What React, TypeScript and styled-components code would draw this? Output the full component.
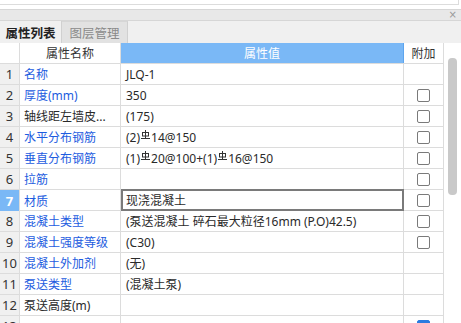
import React from "react";
import styled, { createGlobalStyle } from "styled-components";

const Global = createGlobalStyle`
  html, body { margin: 0; padding: 0; background: #fff; }
  body { font-family: "Noto Sans", "Noto Sans CJK SC", sans-serif; font-size: 12px; color: #333; overflow: hidden; }
`;

const Page = styled.div`
  width: 461px;
  height: 323px;
  overflow: hidden;
  display: flex;
  flex-direction: column;
`;

const TopBox = styled.div`
  height: 4px;
  border-bottom: 1px solid #dcdcdc;
  border-right: 1px solid #dcdcdc;
  margin-right: 2px;
`;

const TopGap = styled.div`
  height: 4px;
`;

const TitleBar = styled.div`
  height: 10px;
  background: #e8e8e8;
  border-top: 1px solid #d6d6d6;
  border-bottom: 1px solid #d6d6d6;
  display: flex;
  justify-content: flex-end;
  align-items: center;
  padding-right: 4px;
  color: #999;
  font-family: "DejaVu Sans", sans-serif;
  font-size: 10px;
  line-height: 10px;
`;

const TabBar = styled.div`
  height: 22px;
  background: #f0f0f0;
  display: flex;
`;

const Tab = styled.div<{ $active?: boolean }>`
  width: ${(p) => (p.$active ? "62px" : "66px")};
  height: 22px;
  box-sizing: border-box;
  display: flex;
  align-items: center;
  justify-content: center;
  font-family: "Noto Sans CJK SC", sans-serif;
  font-size: 12.5px;
  font-weight: ${(p) => (p.$active ? 700 : 400)};
  color: ${(p) => (p.$active ? "#222" : "#8a8a8a")};
  background: ${(p) => (p.$active ? "#f0f0f0" : "#e2e2e2")};
  border-right: 1px solid #d0d0d0;
  border-top: ${(p) => (p.$active ? "none" : "1px solid #d6d6d6")};
`;

const Main = styled.div`
  flex: 1;
  display: flex;
  min-height: 0;
`;

const TableArea = styled.div`
  width: 444px;
  display: flex;
  flex-direction: column;
`;

const Row = styled.div`
  display: grid;
  grid-template-columns: 20px 101px 283px 40px;
  height: 21px;
  box-sizing: border-box;
  border-bottom: 1px solid #dcdcdc;
  flex-shrink: 0;
`;

const NumCell = styled.div<{ $sel?: boolean }>`
  background: ${(p) => (p.$sel ? "#7ab8f6" : "#f0f0f0")};
  color: ${(p) => (p.$sel ? "#fff" : "#333")};
  font-weight: ${(p) => (p.$sel ? 700 : 400)};
  border-right: 1px solid #dcdcdc;
  display: flex;
  align-items: center;
  justify-content: center;
  font-size: 13px;
`;

const HeadNum = styled.div`
  background: #fff;
  border-right: 1px solid #dcdcdc;
`;

const HeadCell = styled.div<{ $blue?: boolean }>`
  background: ${(p) => (p.$blue ? "#7ab8f6" : "#fff")};
  color: ${(p) => (p.$blue ? "#fff" : "#333")};
  border-right: 1px solid ${(p) => (p.$blue ? "#5ea5ee" : "#dcdcdc")};
  display: flex;
  align-items: center;
  justify-content: center;
  white-space: nowrap;
`;

const NameCell = styled.div<{ $blue?: boolean }>`
  color: ${(p) => (p.$blue ? "#1d5ce0" : "#2a2a2a")};
  border-right: 1px solid #dcdcdc;
  padding-left: 4px;
  display: flex;
  align-items: center;
  white-space: nowrap;
  overflow: hidden;
`;

const ValueCell = styled.div<{ $edit?: boolean }>`
  color: #2a2a2a;
  border-right: 1px solid #dcdcdc;
  padding-left: ${(p) => (p.$edit ? "3px" : "5px")};
  display: flex;
  align-items: center;
  white-space: nowrap;
  overflow: hidden;
  box-sizing: border-box;
  ${(p) =>
    p.$edit
      ? "border: 2px solid #7a7a7a; margin-top: -1px; height: 22px; margin-right: 0;"
      : ""}
`;

const ExtraCell = styled.div`
  display: flex;
  align-items: center;
  justify-content: center;
  border-right: 1px solid #dcdcdc;
`;

const Check = styled.span<{ $on?: boolean }>`
  width: 13px;
  height: 13px;
  box-sizing: border-box;
  border: 1px solid ${(p) => (p.$on ? "#2a7be0" : "#7a7a7a")};
  background: ${(p) => (p.$on ? "#2a7be0" : "#fff")};
  border-radius: 2px;
`;

const ScrollTrack = styled.div`
  width: 17px;
  position: relative;
  background: #fff;
`;

const Thumb = styled.div`
  position: absolute;
  left: 4px;
  top: 15px;
  width: 9px;
  height: 137px;
  border-radius: 4px;
  background: #c9c9c9;
`;

const RebarIcon = styled.svg`
  width: 9px;
  height: 10px;
  margin: 0 1px 4px 1px;
  flex-shrink: 0;
`;

const Rebar = () => (
  <RebarIcon viewBox="0 0 9 10">
    <rect x="1.5" y="2.5" width="6" height="3.5" fill="none" stroke="#333" strokeWidth="1" />
    <line x1="4.5" y1="0" x2="4.5" y2="8.5" stroke="#333" strokeWidth="1" />
    <line x1="0" y1="8.5" x2="9" y2="8.5" stroke="#333" strokeWidth="1" />
  </RebarIcon>
);

type RowData = {
  n: number;
  name: string;
  blue: boolean;
  value: React.ReactNode;
  check?: "off" | "on";
  edit?: boolean;
};

const rows: RowData[] = [
  { n: 1, name: "名称", blue: true, value: "JLQ-1" },
  { n: 2, name: "厚度(mm)", blue: true, value: "350", check: "off" },
  { n: 3, name: "轴线距左墙皮...", blue: false, value: "(175)", check: "off" },
  {
    n: 4,
    name: "水平分布钢筋",
    blue: true,
    value: (
      <>
        (2)
        <Rebar />
        14@150
      </>
    ),
    check: "off",
  },
  {
    n: 5,
    name: "垂直分布钢筋",
    blue: true,
    value: (
      <>
        (1)
        <Rebar />
        20@100+(1)
        <Rebar />
        16@150
      </>
    ),
    check: "off",
  },
  { n: 6, name: "拉筋", blue: true, value: "", check: "off" },
  { n: 7, name: "材质", blue: true, value: "现浇混凝土", check: "off", edit: true },
  { n: 8, name: "混凝土类型", blue: true, value: "(泵送混凝土 碎石最大粒径16mm (P.O)42.5)", check: "off" },
  { n: 9, name: "混凝土强度等级", blue: true, value: "(C30)", check: "off" },
  { n: 10, name: "混凝土外加剂", blue: true, value: "(无)" },
  { n: 11, name: "泵送类型", blue: true, value: "(混凝土泵)" },
  { n: 12, name: "泵送高度(m)", blue: false, value: "" },
  { n: 13, name: "", blue: false, value: "", check: "on" },
];

export default function App() {
  return (
    <Page>
      <Global />
      <TopBox />
      <TopGap />
      <TitleBar>×</TitleBar>
      <TabBar>
        <Tab $active>属性列表</Tab>
        <Tab>图层管理</Tab>
      </TabBar>
      <Main>
        <TableArea>
          <Row>
            <HeadNum />
            <HeadCell>属性名称</HeadCell>
            <HeadCell $blue>属性值</HeadCell>
            <HeadCell>附加</HeadCell>
          </Row>
          {rows.map((r) => (
            <Row key={r.n}>
              <NumCell $sel={r.edit}>{r.n}</NumCell>
              <NameCell $blue={r.blue}>{r.name}</NameCell>
              <ValueCell $edit={r.edit}>{r.value}</ValueCell>
              <ExtraCell>{r.check && <Check $on={r.check === "on"} />}</ExtraCell>
            </Row>
          ))}
        </TableArea>
        <ScrollTrack>
          <Thumb />
        </ScrollTrack>
      </Main>
    </Page>
  );
}
